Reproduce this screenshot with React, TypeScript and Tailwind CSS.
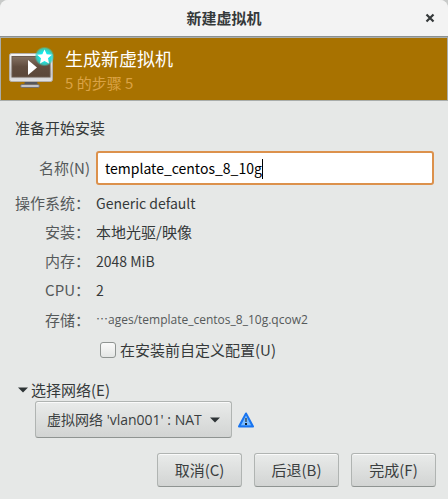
import { useState } from "react";
import type { ReactNode } from "react";

function MonitorIcon() {
  return (
    <svg aria-hidden="true" width="48" height="48" viewBox="0 0 48 48" className="shrink-0">
      <defs>
        <linearGradient id="frame" x1="0" y1="0" x2="0" y2="1">
          <stop offset="0" stopColor="#f4f4f4" />
          <stop offset="0.75" stopColor="#c9c9cb" />
          <stop offset="1" stopColor="#e4e4e6" />
        </linearGradient>
        <linearGradient id="screen" x1="0" y1="0" x2="0" y2="1">
          <stop offset="0" stopColor="#857263" />
          <stop offset="0.5" stopColor="#604c3e" />
          <stop offset="1" stopColor="#5b4739" />
        </linearGradient>
        <radialGradient id="glow">
          <stop offset="0.5" stopColor="#14e8e8" />
          <stop offset="0.8" stopColor="#2fd8cc" stopOpacity="0.8" />
          <stop offset="1" stopColor="#4fb89a" stopOpacity="0" />
        </radialGradient>
      </defs>
      <path d="M18 36h12l1 5H17z" fill="#55565c" />
      <rect x="13.500" y="39.500" width="19" height="3" rx="1.500" fill="#c4c4c8" stroke="#77716b" />
      <rect x="2.500" y="8.500" width="43" height="28" rx="2" fill="url(#frame)" stroke="#b4b0ac" />
      <rect x="5" y="11.500" width="38" height="20.500" fill="url(#screen)" stroke="#6a5a4e" />
      <path d="M21 15v15l9-7.500z" fill="#fff" />
      <circle cx="37.500" cy="11.500" r="10" fill="url(#glow)" />
      <path d="m37.500 4.500 2.200 4.700 5.200.6-3.900 3.500 1 5.200-4.500-2.600-4.500 2.600 1-5.200-3.900-3.500 5.200-.6z" fill="#fff" />
    </svg>
  );
}

function WarningIcon() {
  return (
    <svg role="img" aria-label="警告" width="16" height="16" viewBox="0 0 16 16" className="shrink-0">
      <defs>
        <linearGradient id="warn" x1="0" y1="0" x2="0" y2="1">
          <stop offset="0" stopColor="#3a90f8" />
          <stop offset="1" stopColor="#5aaaff" />
        </linearGradient>
      </defs>
      <path d="M8 1.500 15 14.500H1z" fill="url(#warn)" stroke="#1874f0" strokeWidth="2" strokeLinejoin="round" />
      <path d="M8 3.500 12.500 13h-9z" fill="#7cbcff" />
      <path d="M7 6h2v4H7z" fill="#4a6a88" />
      <path d="M7 11h2v2H7z" fill="#10202e" />
    </svg>
  );
}

function Triangle() {
  return (
    <svg aria-hidden="true" width="10" height="6" viewBox="0 0 10 6" className="shrink-0">
      <path d="M0 0.500h10L5 5.500z" fill="#2e3436" />
    </svg>
  );
}

function Row({ label, children }: { label: string; children: ReactNode }) {
  return (
    <>
      <dt className="text-right text-[#55595a]">{label}</dt>
      <dd className="text-[#35393a]">{children}</dd>
    </>
  );
}

function Latin({ children }: { children: ReactNode }) {
  return <span className="block text-sm leading-5">{children}</span>;
}

function ActionButton({ children }: { children: ReactNode }) {
  return (
    <button
      type="button"
      className="h-[34px] w-[85px] rounded-[3px] border border-[#b0b4b2] border-b-[#8f9492] bg-linear-to-b from-[#e9ebea] to-[#d2d4d3] text-[#3a3e3f] shadow-[inset_0_1px_#fafafa]"
    >
      {children}
    </button>
  );
}

export default function App() {
  const [name, setName] = useState("template_centos_8_10g");
  const [customize, setCustomize] = useState(false);
  const [open, setOpen] = useState(true);

  return (
    <div
      lang="zh-CN"
      className="min-h-screen bg-[#c8cac9] font-['Noto_Sans_CJK_SC',sans-serif] text-[15px] leading-5"
    >
      <div className="flex min-h-screen flex-col rounded-t-lg bg-[#e6e8e7]">
        <header className="grid h-[37px] grid-cols-[1fr_auto_1fr] items-center rounded-t-lg border-b border-[#8b9090] bg-[#f3f3f3] px-3 text-[#35393a]">
          <h1 className="col-start-2 font-bold">新建虚拟机</h1>
          <button type="button" aria-label="关闭" className="justify-self-end">
            <svg aria-hidden="true" width="12" height="12" viewBox="0 0 12 12">
              <path d="m2.500 2.500 7 7m0-7-7 7" stroke="#35393a" strokeWidth="2.200" />
            </svg>
          </button>
        </header>

        <section className="flex h-16 items-center gap-[10px] border border-[#a9adab] bg-[#a87200] px-[6px]">
          <MonitorIcon />
          <div className="pt-1">
            <h2 className="text-lg leading-6 text-white">生成新虚拟机</h2>
            <p className="leading-[26px] text-[#dba345]">5 的步骤 5</p>
          </div>
        </section>

        <main className="px-[14px] pt-[17px]">
          <p className="pl-px text-[#35393a]">准备开始安装</p>

          <div className="mt-[13px] grid grid-cols-[76px_1fr] items-center gap-x-[6px]">
            <label htmlFor="vm-name" className="text-right text-[#55595a]">
              名称(N)
            </label>
            <div className="relative">
              <input
                id="vm-name"
                value={name}
                onChange={(e) => setName(e.target.value)}
                className="block h-[34px] w-full rounded-[3px] border-2 border-[#dc914c] bg-white px-[7px] text-sm text-black caret-transparent outline-none"
              />
              <span aria-hidden="true" className="absolute top-2 left-[166px] h-5 w-px bg-black" />
            </div>
          </div>

          <dl className="mt-2 grid grid-cols-[76px_1fr] items-center gap-x-[6px] gap-y-[9px]">
            <Row label="操作系统：">
              <Latin>Generic default</Latin>
            </Row>
            <Row label="安装：">本地光驱/映像</Row>
            <Row label="内存：">
              <Latin>2048 MiB</Latin>
            </Row>
            <Row label="CPU：">
              <Latin>2</Latin>
            </Row>
            <Row label="存储：">
              <span className="block text-xs leading-5 text-[#55595a]">
                …<span className="font-['Open_Sans',sans-serif]">ages/template_centos_8_10g.qcow2</span>
              </span>
            </Row>
          </dl>

          <label className="mt-[10px] ml-[86px] flex items-center gap-1 text-[#35393a]">
            <input
              type="checkbox"
              checked={customize}
              onChange={(e) => setCustomize(e.target.checked)}
              className="size-4 appearance-none rounded-[3px] border border-[#8f9492] bg-linear-to-b from-[#fafafa] to-[#e4e6e5] checked:bg-[#a87200]"
            />
            在安装前自定义配置(U)
          </label>

          <button
            type="button"
            aria-expanded={open}
            onClick={() => setOpen(!open)}
            className="mt-5 ml-1 flex items-center gap-[3px] text-[#35393a]"
          >
            <Triangle />
            选择网络(E)
          </button>

          {open && (
            <div className="mt-px ml-[21px] flex items-center gap-[6px]">
              <div className="relative">
                <select
                  aria-label="选择网络"
                  className="block h-[37px] w-[197px] appearance-none rounded-[3px] border border-[#b0b4b2] border-b-[#8f9492] bg-linear-to-b from-[#e9ebea] to-[#d2d4d3] px-[11px] font-['Open_Sans','Noto_Sans_CJK_SC',sans-serif] text-sm text-[#3a3e3f] shadow-[inset_0_1px_#fafafa]"
                >
                  <option>虚拟网络 'vlan001' : NAT</option>
                </select>
                <span className="pointer-events-none absolute inset-y-0 right-3 flex items-center">
                  <Triangle />
                </span>
              </div>
              <WarningIcon />
            </div>
          )}
        </main>

        <footer className="mt-auto flex justify-end gap-3 px-3 pb-3">
          <ActionButton>取消(C)</ActionButton>
          <ActionButton>后退(B)</ActionButton>
          <ActionButton>完成(F)</ActionButton>
        </footer>
      </div>
    </div>
  );
}
